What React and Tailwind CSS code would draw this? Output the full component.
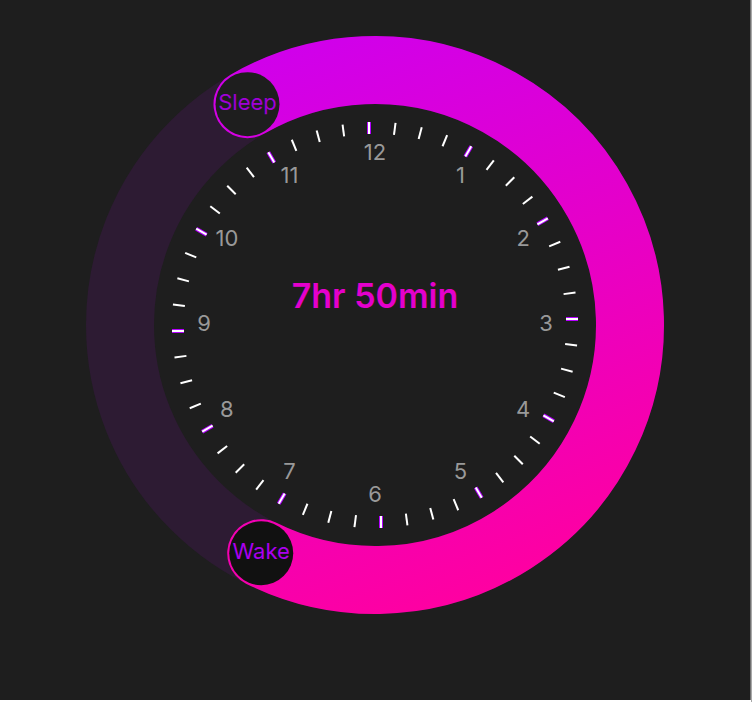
const CX = 375;
const CY = 325;
const R = 255;
const START = -30;
const END = 206.5;

const polar = (deg, radius) => {
  const a = (deg * Math.PI) / 180;
  return [CX + radius * Math.sin(a), CY - radius * Math.cos(a)];
};

const ticks = Array.from({ length: 48 }, (_, i) => i);
const hours = Array.from({ length: 12 }, (_, i) => i + 1);

function Knob({ angle, fill, label, color }) {
  const [x, y] = polar(angle, R);
  return (
    <g>
      <circle cx={x} cy={y} r="32" fill={fill} />
      <text x={x} y={y + 6} textAnchor="middle" fontSize="22" fill={color}>
        {label}
      </text>
    </g>
  );
}

export default function App() {
  const [sx, sy] = polar(START, R);
  const [ex, ey] = polar(END, R);
  return (
    <div className="min-h-screen border-r border-[#a8a8a8] bg-white pb-0.5 font-['Inter',sans-serif]">
      <main className="flex justify-center border-r border-[#707070] bg-[#1e1e1e]">
        <svg
          className="block h-auto w-full max-w-[750px]"
          viewBox="0 0 750 700"
          role="img"
          aria-label="Sleep duration dial"
        >
          <defs>
            <linearGradient id="arc" gradientUnits="userSpaceOnUse" x1="272" y1="42" x2="478" y2="608">
              <stop offset="0" stopColor="#cf00ec" />
              <stop offset="1" stopColor="#ff00a0" />
            </linearGradient>
          </defs>
          <circle cx={CX} cy={CY} r={R} fill="none" stroke="#2d1b33" strokeWidth="68" />
          <path
            d={`M${sx} ${sy}A${R} ${R} 0 1 1 ${ex} ${ey}`}
            fill="none"
            stroke="url(#arc)"
            strokeWidth="68"
            strokeLinecap="round"
          />
          {ticks.map((i) => (
            <g key={i} transform={`rotate(${i * 7.5} ${CX} ${CY})`}>
              {i % 4 === 0 && <rect x="367" y="122" width="4" height="12" fill="#b400ff" />}
              <rect x="368" y="122" width="2" height="12" fill="#fff" />
            </g>
          ))}
          {hours.map((h) => {
            const [x, y] = polar(h * 30, 171);
            return (
              <text key={h} x={x} y={y + 6} textAnchor="middle" fontSize="22" fill="#999">
                {h}
              </text>
            );
          })}
          <text x="375" y="308" textAnchor="middle" fontSize="34" fontWeight="600" fill="#e400cc">
            7hr 50min
          </text>
          <Knob angle={END} fill="#111" label="Wake" color="#aa00ee" />
          <Knob angle={START} fill="#1e1e1e" label="Sleep" color="#a000d8" />
        </svg>
      </main>
    </div>
  );
}
